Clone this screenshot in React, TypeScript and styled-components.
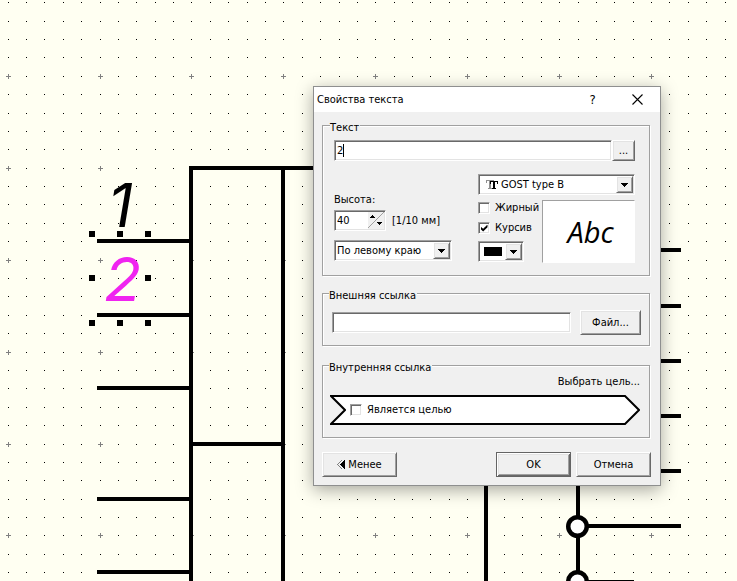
import React, { useState } from 'react';
import styled, { createGlobalStyle, css } from 'styled-components';

const GlobalStyle = createGlobalStyle`
  * { box-sizing: border-box; }
  html, body { margin: 0; }
  body {
    background: #fffff2;
    color: #000;
    font-family: 'DejaVu Sans Condensed', 'Noto Sans', sans-serif;
    font-size: 11px;
    line-height: 14px;
  }
  button, input, select { font: inherit; color: inherit; margin: 0; border-radius: 0; }
`;

const sunken = css`
  border: 1px solid;
  border-color: #a0a0a0 #fff #fff #a0a0a0;
  box-shadow: inset 1px 1px 0 #696969, inset -1px -1px 0 #e3e3e3;
`;

const raised = css`
  border: 1px solid;
  border-color: #fff #696969 #696969 #fff;
  box-shadow: inset 1px 1px 0 #e3e3e3, inset -1px -1px 0 #a0a0a0;
`;

/* ---------- drawing sheet ---------- */

const Sheet = styled.main`
  position: relative;
  min-height: 100vh;
  overflow: hidden;
  display: grid;
`;

const Drawing = styled.svg`
  width: 100%;
  height: 100%;
  min-height: 100vh;
  display: block;
`;

const Digit = styled.text`
  font-family: Inter, sans-serif;
  font-style: italic;
  font-weight: 400;
  font-size: 61px;
`;

const gridX = [
  8, 26, 44, 63, 81, 100, 118, 136, 155, 173, 191, 210, 228, 247, 265, 283, 302, 320, 339, 357,
  375, 394, 412, 430, 449, 467, 486, 504, 522, 541, 559, 578, 596, 614, 633, 651, 669, 688, 706, 725,
];
const gridY = [
  2, 21, 39, 57, 76, 94, 113, 131, 149, 168, 186, 204, 223, 241, 260, 278, 296, 315, 333, 352,
  370, 388, 407, 425, 444, 462, 480, 499, 517, 535, 554, 572,
];

const dots = gridY
  .map((y, j) => gridX.map((x, i) => (i % 5 === 0 && j % 5 === 4 ? '' : `M${x} ${y}h1v1h-1z`)).join(''))
  .join('');
const crosses = gridY
  .filter((_, j) => j % 5 === 4)
  .map((y) => gridX.filter((_, i) => i % 5 === 0).map((x) => `M${x - 2} ${y}h5v1h-5zM${x} ${y - 2}h1v5h-1z`).join(''))
  .join('');

const wires = [
  'M191 700V168H400', 'M283 168V700', 'M191 444H283', 'M486 400V700', 'M578 400V700',
  ...[241, 315, 388, 499, 572].map((y) => `M97 ${y}H191`),
  ...[250, 306, 361, 416, 471].map((y) => `M600 ${y}H681`),
  'M578 526H681', 'M578 582H634',
].join('');

const handles = [
  [89, 231], [117, 231], [145, 231],
  [89, 275], [145, 275],
  [89, 320], [117, 320], [145, 320],
];

function Schematic() {
  return (
    <Drawing role="img" aria-label="Схема">
      <g shapeRendering="crispEdges">
        <path d={dots} fill="#000" />
        <path d={crosses} fill="#808080" />
        <path d={wires} fill="none" stroke="#000" strokeWidth="4" />
        {handles.map(([x, y]) => <rect key={`${x}-${y}`} x={x} y={y} width="6" height="6" />)}
      </g>
      <circle cx="577.5" cy="526.5" r="9.25" fill="#fff" stroke="#000" strokeWidth="4.5" />
      <circle cx="577.5" cy="581.5" r="9.25" fill="#fff" stroke="#000" strokeWidth="4.5" />
      <Digit x="108" y="227">1</Digit>
      <Digit x="104" y="301" fill="#f024f0">2</Digit>
    </Drawing>
  );
}

/* ---------- dialog ---------- */

const Dialog = styled.form`
  position: absolute;
  left: 313px;
  top: 86px;
  width: 348px;
  background: #f0f0f0;
  border: 1px solid #8e8f8f;
  box-shadow: 0 4px 16px rgba(0, 0, 0, 0.35);
`;

const TitleBar = styled.header`
  display: flex;
  height: 25px;
  background: #fff;
`;

const Title = styled.h1`
  flex: 1;
  margin: 0;
  padding-left: 3px;
  font-size: 11px;
  font-weight: 400;
  line-height: 25px;
`;

const CaptionButton = styled.button`
  display: grid;
  place-items: center;
  width: 45px;
  padding: 0;
  border: 0;
  background: none;
  font-size: 13px;
`;

const Body = styled.div`
  padding: 3px 9px 8px 8px;
`;

const Group = styled.fieldset<{ $pad: string; $space?: number }>`
  min-width: 0;
  margin: ${(p) => p.$space ?? 0}px 1px 0 0;
  padding: ${(p) => p.$pad};
  border: 1px solid #a0a0a0;
  box-shadow: 1px 1px 0 #fff, inset 1px 1px 0 #fff;
`;

const Legend = styled.legend<{ $shift: number }>`
  margin-left: ${(p) => p.$shift}px;
  padding: 6px 1px 0 0;
  background: #f0f0f0;
`;

const Field = styled.input`
  ${sunken}
  flex: 1;
  min-width: 0;
  height: 21px;
  padding: 0 2px;
  background: #fff;
  outline: none;
`;

const TextRow = styled.div`
  display: flex;
`;

const Stack = styled.div`
  flex: 1;
  display: grid;
  align-items: center;
  > * { grid-area: 1 / 1; }
`;

const Caret = styled.i`
  width: 1px;
  height: 13px;
  margin-left: 9px;
  background: #000;
`;

const Button = styled.button<{ $default?: boolean }>`
  ${raised}
  display: flex;
  align-items: center;
  justify-content: center;
  gap: 3px;
  width: 75px;
  height: 25px;
  padding: 0;
  background: #f0f0f0;
  ${(p) => p.$default && css`
    border: 1px solid #646464;
    box-shadow: inset 1px 1px 0 #fff, inset -1px -1px 0 #696969, inset 2px 2px 0 #e3e3e3, inset -2px -2px 0 #a0a0a0;
  `}
`;
const MoreButton = styled(Button)`
  width: 23px;
  height: 21px;
`;
const FileButton = styled(Button)`
  width: 61px;
`;

const Columns = styled.div`
  display: grid;
  grid-template-columns: 1fr 157px;
  align-items: end;
  margin-top: 13px;
`;

const SizeColumn = styled.div`
  display: grid;
  justify-items: start;
  padding-bottom: 2px;
`;

const SizeRow = styled.div`
  display: flex;
  align-items: center;
  gap: 6px;
  margin: 3px 0 9px;
`;

const Spin = styled.span`
  ${sunken}
  display: flex;
  width: 52px;
  height: 21px;
  padding: 1px;
  background: #fff;
`;

const SpinInput = styled.input`
  flex: 1;
  min-width: 0;
  padding: 0 1px;
  border: 0;
  background: none;
  outline: none;
  appearance: textfield;
  &::-webkit-inner-spin-button { appearance: none; margin: 0; }
`;

const Combo = styled.span<{ $width: number }>`
  display: grid;
  align-items: center;
  width: ${(p) => p.$width}px;
  > * { grid-area: 1 / 1; }
`;

const Select = styled.select<{ $indent?: number }>`
  ${sunken}
  appearance: none;
  width: 100%;
  height: 21px;
  padding: 0 20px 0 ${(p) => p.$indent ?? 2}px;
  background: #fff;
  outline: none;
`;

const Drop = styled.span`
  ${raised}
  display: grid;
  place-items: center;
  justify-self: end;
  width: 17px;
  height: 17px;
  margin-right: 2px;
  background: #f0f0f0;
  pointer-events: none;
`;

const FontMark = styled.svg`
  margin-left: 8px;
  pointer-events: none;
`;

const Swatch = styled.span`
  width: 18px;
  height: 9px;
  margin-left: 6px;
  background: #000;
  pointer-events: none;
`;

const StyleRow = styled.div`
  display: flex;
  justify-content: space-between;
  margin-top: 5px;
`;

const Checks = styled.div`
  display: grid;
  align-content: start;
  gap: 6px;
  padding-top: 1px;
`;

const Check = styled.label`
  display: flex;
  align-items: center;
  gap: 5px;
`;

const Box = styled.input`
  ${sunken}
  appearance: none;
  display: grid;
  place-items: center;
  width: 12px;
  height: 12px;
  background: #fff;
  &:checked::before {
    content: '';
    width: 7px;
    height: 7px;
    background: #000;
    clip-path: polygon(0 28%, 38% 62%, 100% 0, 100% 38%, 38% 100%, 0 66%);
  }
`;

const Preview = styled.output`
  display: grid;
  place-items: center;
  width: 93px;
  height: 63px;
  margin-left: -10px;
  padding-left: 4px;
  border: 1px solid;
  border-color: #a0a0a0 #fff #fff #a0a0a0;
  background: #fff;
  font: italic 400 29px/40px 'Open Sans', sans-serif;
`;

const LinkRow = styled.div`
  display: flex;
  align-items: center;
  gap: 9px;
  padding: 0 1px 0 2px;
`;

const TargetLink = styled.a`
  display: block;
  text-align: right;
  color: #000;
  text-decoration: none;
`;

const Banner = styled.div`
  display: grid;
  align-items: center;
  height: 30px;
  margin-top: 6px;
  > * { grid-area: 1 / 1; }
`;

const BannerEnds = styled.span`
  display: flex;
  height: 30px;
`;

const BannerBar = styled.span`
  flex: 1;
  border: solid #000;
  border-width: 2px 0;
  background: #fff;
`;

const BannerCheck = styled(Check)`
  padding-left: 20px;
`;

const Footer = styled.footer`
  display: flex;
  gap: 5px;
  margin-top: 14px;
`;

const Spacer = styled.span`
  flex: 1;
`;

function DropArrow() {
  return (
    <Drop>
      <svg width="7" height="4" shapeRendering="crispEdges" aria-hidden="true">
        <path d="M0 0h7v1h-7zM1 1h5v1h-5zM2 2h3v1h-3zM3 3h1v1h-1z" />
      </svg>
    </Drop>
  );
}

export default function App() {
  const [text, setText] = useState('2');
  return (
    <>
      <GlobalStyle />
      <Sheet>
        <Schematic />
        <Dialog role="dialog" aria-labelledby="title" onSubmit={(e) => e.preventDefault()}>
          <TitleBar>
            <Title id="title">Свойства текста</Title>
            <CaptionButton type="button" aria-label="Справка">?</CaptionButton>
            <CaptionButton type="button" aria-label="Закрыть">
              <svg width="11" height="11" aria-hidden="true">
                <path d="M.5.5l10 10M10.5.5l-10 10" stroke="#000" strokeWidth="1.1" />
              </svg>
            </CaptionButton>
          </TitleBar>
          <Body>
            <Group $pad="5px 14px 12px 11px">
              <Legend $shift={-4}>Текст</Legend>
              <TextRow>
                <Stack>
                  <Field aria-label="Текст" value={text} onChange={(e) => setText(e.target.value)} />
                  <Caret />
                </Stack>
                <MoreButton type="button">...</MoreButton>
              </TextRow>
              <Columns>
                <SizeColumn>
                  <label htmlFor="size">Высота:</label>
                  <SizeRow>
                    <Spin>
                      <SpinInput id="size" type="number" defaultValue="40" />
                      <svg width="16" height="17" shapeRendering="crispEdges" aria-hidden="true">
                        <path d="M0 0h16v17H0z" fill="#f0f0f0" />
                        <path d="M0 16L16 0" stroke="#a0a0a0" shapeRendering="auto" />
                        <path d="M4 3h1v1h1v1h1v1H2V5h1V4h1zM9 10h5v1h-1v1h-1v1h-1v-1h-1v-1H9z" />
                      </svg>
                    </Spin>
                    <span>[1/10 мм]</span>
                  </SizeRow>
                  <Combo $width={118}>
                    <Select aria-label="Выравнивание"><option>По левому краю</option></Select>
                    <DropArrow />
                  </Combo>
                </SizeColumn>
                <div>
                  <Combo $width={157}>
                    <Select aria-label="Шрифт" $indent={22}><option>GOST type B</option></Select>
                    <FontMark width="12" height="10" shapeRendering="crispEdges" aria-hidden="true">
                      <path d="M0 0h8v3H7V1H5v7h1v1H2V8h1V1H1v2H0z" fill="#909090" />
                      <path d="M4 1h8v3h-1V2H9v6h1v1H6V8h1V2H5v2H4z" />
                    </FontMark>
                    <DropArrow />
                  </Combo>
                  <StyleRow>
                    <Checks>
                      <Check><Box type="checkbox" />Жирный</Check>
                      <Check><Box type="checkbox" defaultChecked />Курсив</Check>
                      <Combo $width={46}>
                        <Select aria-label="Цвет"><option value="#000000" aria-label="Чёрный" /></Select>
                        <Swatch />
                        <DropArrow />
                      </Combo>
                    </Checks>
                    <Preview>Abc</Preview>
                  </StyleRow>
                </div>
              </Columns>
            </Group>

            <Group $pad="7px 7px 10px 7px" $space={7}>
              <Legend $shift={-1}>Внешняя ссылка</Legend>
              <LinkRow>
                <Field aria-label="Внешняя ссылка" />
                <FileButton type="button">Файл...</FileButton>
              </LinkRow>
            </Group>

            <Group $pad="0 9px 12px 7px" $space={9}>
              <Legend $shift={-1}>Внутренняя ссылка</Legend>
              <TargetLink href="#target">Выбрать цель...</TargetLink>
              <Banner>
                <BannerEnds>
                  <svg width="16" height="30" aria-hidden="true">
                    <path d="M1 1H16V29H1L15 15z" fill="#fff" />
                    <path d="M16 1H1L15 15L1 29H16" fill="none" stroke="#000" strokeWidth="2" />
                  </svg>
                  <BannerBar />
                  <svg width="16" height="30" aria-hidden="true">
                    <path d="M0 1H1L15 15L1 29H0" fill="#fff" stroke="#000" strokeWidth="2" />
                  </svg>
                </BannerEnds>
                <BannerCheck><Box type="checkbox" />Является целью</BannerCheck>
              </Banner>
            </Group>

            <Footer>
              <Button type="button">
                <svg width="8" height="9" shapeRendering="crispEdges" aria-hidden="true">
                  <path d="M4 0h1v1h-1v1h-1v1h-1v1h-1v1h1v1h1v1h1v1h1v1h-1v-1h-1v-1h-1v-1h-1v-1h-1v-1h1v-1h1v-1h1v-1h1z" fill="#808080" />
                  <path d="M8 0v9H7V8H6V7H5V6H4V5H3V4h1V3h1V2h1V1h1V0z" />
                </svg>
                Менее
              </Button>
              <Spacer />
              <Button type="submit" $default>OK</Button>
              <Button type="button">Отмена</Button>
            </Footer>
          </Body>
        </Dialog>
      </Sheet>
    </>
  );
}
